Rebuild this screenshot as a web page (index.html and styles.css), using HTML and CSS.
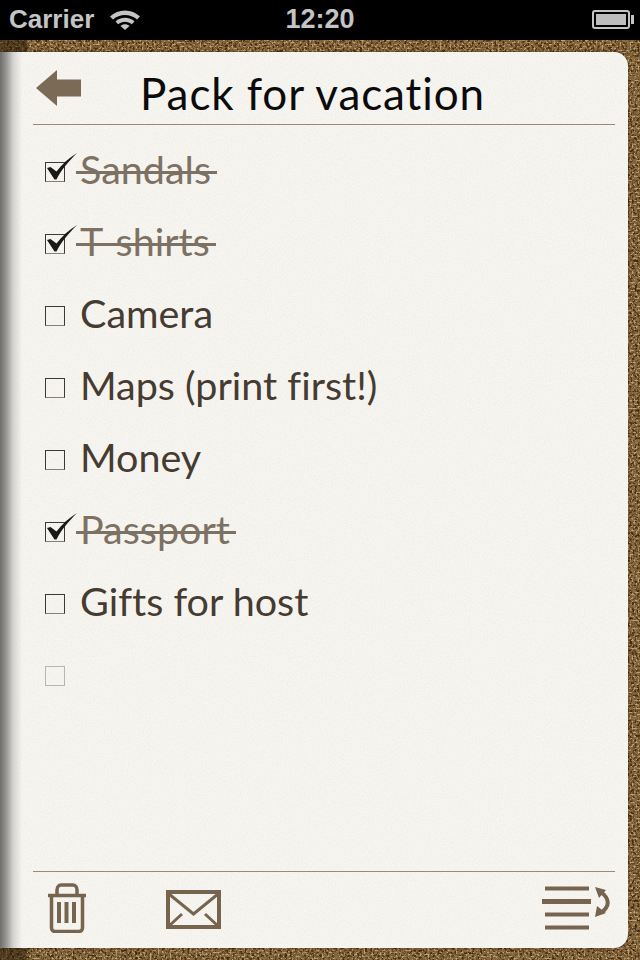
FILE: index.html
```html
<!DOCTYPE html>
<html lang="en">
<head>
    <meta charset="UTF-8">
    <meta name="viewport" content="width=device-width, initial-scale=1.0">
    <title>Pack for vacation</title>
    <link rel="stylesheet" href="styles.css">
</head>
<body>
    <div class="statusbar">
        <div class="status-left">
            <span class="carrier">Carrier</span>
            <svg class="wifi" width="32" height="22" viewBox="0 0 32 22">
                <path d="M1 8.500C9 0.500 23 0.500 31 8.500L28 11.500C21.500 5.500 10.500 5.500 4 11.500Z" fill="#c4c4c4"/>
                <path d="M6.500 13.500C11.500 8.500 20.500 8.500 25.500 13.500L22.800 16.200C19 12.800 13 12.800 9.200 16.200Z" fill="#c4c4c4"/>
                <path d="M11.500 18C14 15.600 18 15.600 20.500 18L16 22Z" fill="#c4c4c4"/>
            </svg>
        </div>
        <span class="clock">12:20</span>
        <div class="battery"><div class="battery-level"></div></div>
    </div>

    <div class="desk">
        <svg class="grain" width="640" height="920">
            <filter id="corkDark" x="0" y="0" width="100%" height="100%" color-interpolation-filters="sRGB">
                <feTurbulence type="fractalNoise" baseFrequency="0.4" numOctaves="3" seed="4"/>
                <feColorMatrix values="0 0 0 0 0.25  0 0 0 0 0.17  0 0 0 0 0.07  4 0 0 0 -1.8"/>
                <feGaussianBlur stdDeviation="0.6"/>
            </filter>
            <filter id="corkLight" x="0" y="0" width="100%" height="100%" color-interpolation-filters="sRGB">
                <feTurbulence type="fractalNoise" baseFrequency="0.5" numOctaves="2" seed="11"/>
                <feColorMatrix values="0 0 0 0 0.76  0 0 0 0 0.64  0 0 0 0 0.44  5 0 0 0 -2.6"/>
                <feGaussianBlur stdDeviation="0.6"/>
            </filter>
            <rect width="640" height="920" filter="url(#corkDark)"/>
            <rect width="640" height="920" filter="url(#corkLight)"/>
        </svg>
        <div class="spine-cork"></div>

        <div class="paper">
            <svg class="grain" width="628" height="896">
                <filter id="paperNoise" x="0" y="0" width="100%" height="100%" color-interpolation-filters="sRGB">
                    <feTurbulence type="fractalNoise" baseFrequency="0.7" numOctaves="2" seed="9"/>
                    <feColorMatrix values="0 0 0 0 0.62  0 0 0 0 0.58  0 0 0 0 0.5  0.16 0 0 0 -0.05"/>
                </filter>
                <rect width="628" height="896" filter="url(#paperNoise)"/>
            </svg>
            <div class="spine"></div>

            <header class="header">
                <svg class="back" width="46" height="36" viewBox="0 0 46 36">
                    <path d="M0 18L21 0V9.500H45V26.500H21V36Z" fill="#7a6a56"/>
                </svg>
                <h1 class="title">Pack for vacation</h1>
            </header>

            <ul class="list">
                <li class="item done">
                    <span class="box">
                        <svg class="tick" width="34" height="30" viewBox="0 0 34 30"><path d="M2 15L5.500 14L11.500 18.500C17 11 24 5 32 0C24 8 16 17 11.500 26.500H9.500Z" fill="#1c1a18"/></svg>
                    </span>
                    <span class="label">Sandals</span>
                </li>
                <li class="item done">
                    <span class="box">
                        <svg class="tick" width="34" height="30" viewBox="0 0 34 30"><path d="M2 15L5.500 14L11.500 18.500C17 11 24 5 32 0C24 8 16 17 11.500 26.500H9.500Z" fill="#1c1a18"/></svg>
                    </span>
                    <span class="label">T-shirts</span>
                </li>
                <li class="item"><span class="box"></span><span class="label">Camera</span></li>
                <li class="item"><span class="box"></span><span class="label">Maps (print first!)</span></li>
                <li class="item"><span class="box"></span><span class="label">Money</span></li>
                <li class="item done">
                    <span class="box">
                        <svg class="tick" width="34" height="30" viewBox="0 0 34 30"><path d="M2 15L5.500 14L11.500 18.500C17 11 24 5 32 0C24 8 16 17 11.500 26.500H9.500Z" fill="#1c1a18"/></svg>
                    </span>
                    <span class="label">Passport</span>
                </li>
                <li class="item"><span class="box"></span><span class="label">Gifts for host</span></li>
                <li class="item empty"><span class="box"></span></li>
            </ul>

            <footer class="toolbar">
                <svg width="40" height="50" viewBox="0 0 40 50" fill="none" stroke="#76644f">
                    <path d="M1 12.500H39" stroke-width="3.500"/>
                    <path d="M10 12V7C10 4 12 2 14 2H26C28 2 30 4 30 7V12" stroke-width="3.500"/>
                    <path d="M4.500 13V45C4.500 47 6 48.500 8 48.500H32C34 48.500 35.500 47 35.500 45V13" stroke-width="3.500"/>
                    <path d="M12 19V40M19.500 19V40M27 19V40" stroke-width="4"/>
                </svg>
                <svg class="mail" width="56" height="40" viewBox="0 0 56 40" fill="none" stroke="#76644f">
                    <rect x="2" y="2" width="51" height="35" stroke-width="4"/>
                    <path d="M3 4L27.500 24L52 4" stroke-width="3"/>
                    <path d="M4 35L16 24M51 35L39 24" stroke-width="3"/>
                </svg>
                <svg class="sort" width="68" height="48" viewBox="0 0 68 48" fill="none" stroke="#76644f">
                    <path d="M3 2.500H47M3 28.500H47M3 41.500H47" stroke-width="4"/>
                    <path d="M0 15.500H49" stroke-width="5"/>
                    <path d="M59 6C68 13 68 20 59 27" stroke-width="4"/>
                    <path d="M53 1L64 4L57 12Z M53 31L55 20L64 27Z" fill="#76644f" stroke="none"/>
                </svg>
            </footer>
        </div>
    </div>
</body>
</html>
```

FILE: styles.css
```css
* {
    box-sizing: border-box;
}
html, body {
    margin: 0;
    padding: 0;
}
body {
    width: 640px;
    height: 960px;
    overflow: hidden;
    font-family: "Lato", "Liberation Sans", sans-serif;
    font-variant-ligatures: none;
    background-color: #000;
    display: flex;
    flex-direction: column;
}

/* status bar */
.statusbar {
    height: 40px;
    padding: 0 9px 2px;
    background-color: #000;
    color: #c4c4c4;
    font-family: "Liberation Sans", Arial, sans-serif;
    font-weight: bold;
    display: grid;
    grid-template-columns: 1fr auto 1fr;
    align-items: center;
}
.status-left {
    display: flex;
    align-items: center;
    gap: 15px;
}
.carrier {
    font-size: 26px;
}
.clock {
    font-size: 27px;
}
.battery {
    justify-self: end;
    width: 38px;
    height: 19px;
    margin-right: 1px;
    padding: 2px;
    border: 2px solid #c4c4c4;
    border-radius: 3px;
    position: relative;
}
.battery::after {
    content: "";
    position: absolute;
    right: -6px;
    top: 3px;
    width: 3px;
    height: 9px;
    background-color: #c4c4c4;
}
.battery-level {
    height: 100%;
    background-color: #bdbdbd;
}

/* cork board */
.desk {
    flex: 1;
    position: relative;
    padding: 12px 12px 12px 0;
    background-color: #87683f;
    display: flex;
}
.grain {
    position: absolute;
    left: 0;
    top: 0;
}
.spine-cork {
    position: absolute;
    left: 0;
    top: 0;
    bottom: 0;
    width: 27px;
    background-color: rgba(40, 25, 10, 0.55);
}

/* note paper */
.paper {
    flex: 1;
    position: relative;
    overflow: hidden;
    padding: 0 13px 0 33px;
    background-color: #f8f6f2;
    border-radius: 0 14px 14px 0;
    box-shadow: 0 0 3px rgba(30, 20, 5, 0.5);
    display: flex;
    flex-direction: column;
}
.spine {
    position: absolute;
    left: 0;
    top: 0;
    bottom: 0;
    width: 22px;
    background: linear-gradient(to right, #6e6d6a, #9a9996 30%, #d5d3cf 60%, rgba(246, 244, 239, 0));
}

.header {
    position: relative;
    height: 73px;
    padding-left: 3px;
    border-bottom: 1px solid #9a8a70;
    display: flex;
    align-items: center;
}
.title {
    margin: 0 0 0 58px;
    padding-top: 9px;
    font-size: 44px;
    font-weight: 400;
    letter-spacing: 0.9px;
    color: #0b0b0b;
    white-space: nowrap;
}

.list {
    position: relative;
    flex: 1;
    list-style: none;
    margin: 0;
    padding: 11px 0 0 12px;
}
.item {
    height: 72px;
    display: flex;
    align-items: center;
    gap: 15px;
    font-size: 39.5px;
    color: #453b30;
}
.box {
    position: relative;
    flex: none;
    width: 20px;
    height: 20px;
    border: 1px solid #3c3a36;
    border-bottom-color: #85817a;
}
.tick {
    position: absolute;
    left: -1px;
    top: -10px;
}
.label {
    position: relative;
    margin-top: -6px;
    line-height: 48px;
    white-space: nowrap;
}
.done .label {
    color: #7d7164;
}
.done .label::after {
    content: "";
    position: absolute;
    left: -4px;
    right: -6px;
    top: 26px;
    height: 3px;
    background-color: #7d7164;
}
.empty .box {
    border-color: #b9b6b0;
}

.toolbar {
    position: relative;
    height: 77px;
    padding: 11px 5px 0 14px;
    border-top: 1px solid #9a8a70;
    display: flex;
    align-items: flex-start;
}
.mail {
    margin: 7px 0 0 79px;
}
.sort {
    margin: 3px 0 0 auto;
}
```
